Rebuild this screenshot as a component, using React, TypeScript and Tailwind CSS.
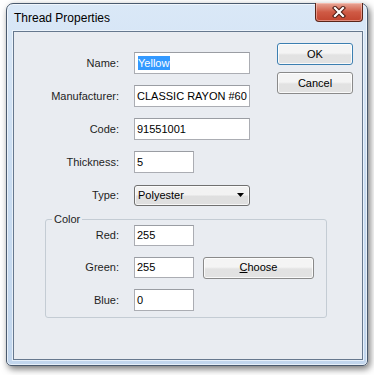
import type { ReactNode } from 'react';

const FONT = "font-['Liberation_Sans',Arial,sans-serif]";

const fieldClass =
  'flex items-center overflow-hidden whitespace-nowrap border border-[#abadb3] border-t-[#9a9da3] bg-white px-[2px] text-[11px] text-black';

const buttonClass =
  'flex items-center justify-center rounded-[3px] border bg-gradient-to-b from-[#f4f4f4] from-45% to-[#e2e2e2] to-55% text-[11px] text-black shadow-[inset_0_0_0_1px_rgba(255,255,255,0.8)]';

function Row({
  label,
  labelWidth,
  height,
  children,
}: {
  label: string;
  labelWidth: string;
  height: string;
  children: ReactNode;
}) {
  return (
    <div className={`flex items-center ${height}`}>
      <span className={`${labelWidth} pr-[1px] text-right text-[11px] text-[#1e1e1e]`}>
        {label}
      </span>

      <div className="ml-[14px] flex items-center">{children}</div>
    </div>
  );
}

function Field({
  value,
  width,
  height = 'h-[22px]',
}: {
  value: ReactNode;
  width: string;
  height?: string;
}) {
  return (
    <div className={`${fieldClass} ${width} ${height}`}>
      {value}
    </div>
  );
}

export default function App() {
  return (
    <div className={`h-[375px] w-[374px] overflow-hidden bg-white pl-[6px] pt-[3px] ${FONT}`}>
      {/* window frame */}
      <div className="flex h-[363px] w-[362px] flex-col rounded-t-[7px] rounded-b-[5px] border border-[#4a5a6e] bg-gradient-to-b from-[#dae8f7] via-[#c9dcf1] to-[#c2d6ed] shadow-[2px_3px_7px_rgba(0,0,0,0.55),inset_0_0_0_1px_rgba(255,255,255,0.6)]">
        {/* title bar */}
        <div className="flex h-[27px] items-start">
          <span className="pl-[7px] pt-[6px] text-[12px] leading-[16px] text-black">
            Thread Properties
          </span>

          <div className="ml-auto mr-[4px] -mt-[1px] flex h-[19px] w-[48px] items-center justify-center rounded-b-[4px] border border-t-0 border-[#5a2418] bg-gradient-to-b from-[#e8a899] from-0% via-[#cf5a45] via-50% to-[#c2452f] shadow-[inset_0_0_0_1px_rgba(255,210,200,0.5)]">
            <svg width="14" height="12" viewBox="0 0 14 12">
              <path
                d="M3 2 L11 10 M11 2 L3 10"
                stroke="#4a1a12"
                strokeWidth="4.2"
                strokeLinecap="square"
              />
              <path
                d="M3 2 L11 10 M11 2 L3 10"
                stroke="#ffffff"
                strokeWidth="2.2"
                strokeLinecap="square"
              />
            </svg>
          </div>
        </div>

        {/* client area */}
        <div className="ml-[6px] flex h-[329px] w-[350px] flex-col border border-[#66788e] bg-[#e9ecf1] shadow-[0_0_0_1px_rgba(240,246,253,0.8)]">
          <div className="flex items-start">
            <div className="flex flex-col gap-[11px] pt-[20px]">
              <Row label="Name:" labelWidth="w-[106px]" height="h-[22px]">
                <Field
                  width="w-[116px]"
                  value={
                    <span className="ml-[1px] bg-[#3399ff] pr-[1px] leading-[14px] text-white">
                      Yellow
                    </span>
                  }
                />
              </Row>

              <Row label="Manufacturer:" labelWidth="w-[106px]" height="h-[22px]">
                <Field width="w-[116px]" value="CLASSIC RAYON #60" />
              </Row>

              <Row label="Code:" labelWidth="w-[106px]" height="h-[22px]">
                <Field width="w-[116px]" value="91551001" />
              </Row>

              <Row label="Thickness:" labelWidth="w-[106px]" height="h-[22px]">
                <Field width="w-[60px]" value="5" />
              </Row>

              <Row label="Type:" labelWidth="w-[106px]" height="h-[22px]">
                <div className="flex h-[21px] w-[116px] items-center rounded-[3px] border border-[#707070] bg-gradient-to-b from-[#f2f2f2] from-45% to-[#dfdfdf] to-55% pl-[3px] pr-[5px] text-[11px] text-black shadow-[inset_0_0_0_1px_rgba(255,255,255,0.7)]">
                  <span>Polyester</span>

                  <svg
                    className="ml-auto"
                    width="7"
                    height="4"
                    viewBox="0 0 7 4"
                  >
                    <path d="M0 0 H7 L3.5 4 Z" fill="#000" />
                  </svg>
                </div>
              </Row>
            </div>

            <div className="ml-auto mr-[9px] flex flex-col gap-[7px] pt-[11px]">
              <button
                type="button"
                className={`${buttonClass} h-[22px] w-[76px] border-[#3c7fb1] shadow-[inset_0_0_0_1px_rgba(180,220,250,0.9)]`}
              >
                OK
              </button>

              <button
                type="button"
                className={`${buttonClass} h-[22px] w-[76px] border-[#8a8a8a]`}
              >
                Cancel
              </button>
            </div>
          </div>

          {/* color group */}
          <div className="relative ml-[31px] mt-[13px] flex w-[282px] flex-col gap-[11px] rounded-[3px] border border-[#c4ccd4] pb-[6px] pt-[5px]">
            <span className="absolute -top-[7px] left-[6px] bg-[#e9ecf1] px-[2px] text-[11px] leading-[13px] text-[#1e1e1e]">
              Color
            </span>

            <Row label="Red:" labelWidth="w-[74px]" height="h-[21px]">
              <Field width="w-[60px]" height="h-[21px]" value="255" />
            </Row>

            <Row label="Green:" labelWidth="w-[74px]" height="h-[21px]">
              <Field width="w-[60px]" height="h-[21px]" value="255" />

              <button
                type="button"
                className={`${buttonClass} ml-[9px] h-[22px] w-[111px] border-[#8a8a8a]`}
              >
                <span className="underline">C</span>hoose
              </button>
            </Row>

            <Row label="Blue:" labelWidth="w-[74px]" height="h-[22px]">
              <Field width="w-[60px]" value="0" />
            </Row>
          </div>
        </div>
      </div>
    </div>
  );
}
